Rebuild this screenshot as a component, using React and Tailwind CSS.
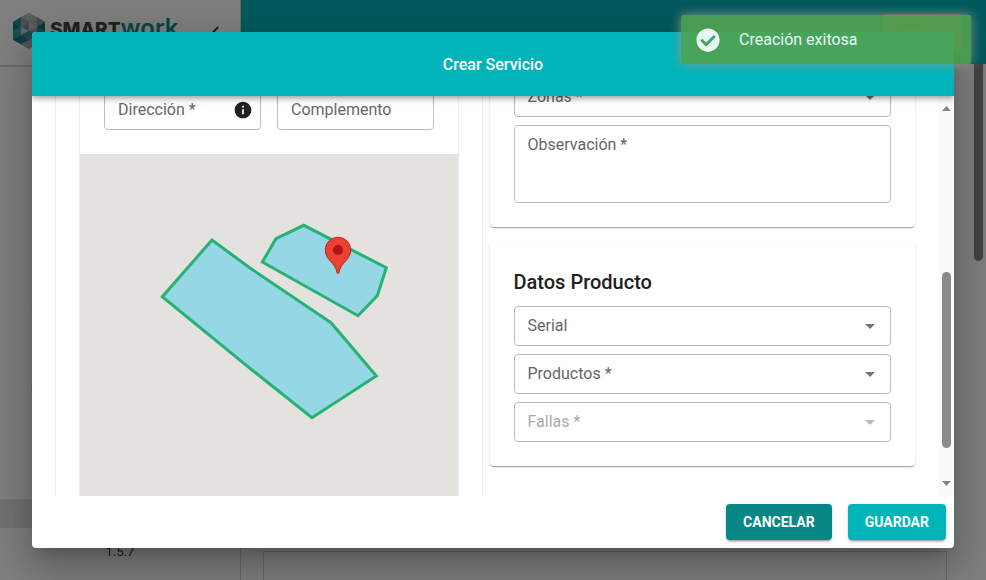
import React from "react";
import { MdInfo, MdArrowDropDown } from "react-icons/md";
import { FaCheckCircle } from "react-icons/fa";
import { ChevronLeft, Wrench, Users, MapPin, Truck, Calendar, Settings, FileText } from "lucide-react";

const cardShadow =
  "shadow-[0_2px_1px_-1px_rgba(0,0,0,0.2),0_1px_1px_0_rgba(0,0,0,0.14),0_1px_3px_0_rgba(0,0,0,0.12)]";

const navItems = [
  { name: "Inicio", Icon: FileText },
  { name: "Clientes", Icon: Users },
  { name: "Zonas", Icon: MapPin },
  { name: "Rutas", Icon: Truck },
  { name: "Agenda", Icon: Calendar },
  { name: "Ajustes", Icon: Settings },
  { name: "Servicios", Icon: Wrench, active: true },
];

function Logo() {
  return (
    <svg viewBox="0 0 34 36" className="h-9 w-[34px] shrink-0" aria-hidden="true">
      <path d="M17 0 33 9V27L17 36 1 27V9Z" fill="#a6a8ab" />
      <path d="M17 0 25 4 17 9 9 4Z" fill="#b9bbbd" />
      <path d="M9 4 17 9 9 14Z" fill="#9a9da0" />
      <path d="M25 4 17 9 25 14Z" fill="#adafb1" />
      <path d="M9 14 17 9 17 18Z" fill="#8c8f93" />
      <path d="M25 14 17 9 17 18Z" fill="#c2c4c6" />
      <path d="M1 9 9 4 9 14Z" fill="#1b8f98" />
      <path d="M1 9 9 14 1 18Z" fill="#157882" />
      <path d="M1 18 9 14 9 22Z" fill="#36a3ab" />
      <path d="M1 18 9 22 1 27Z" fill="#1fa0a6" />
      <path d="M1 27 9 22 9 31Z" fill="#157882" />
      <path d="M33 9 25 4 25 14Z" fill="#8f9396" />
      <path d="M33 9 25 14 33 18Z" fill="#0f6f7a" />
      <path d="M33 18 25 14 25 22Z" fill="#1e929b" />
      <path d="M33 18 25 22 25 31 33 27Z" fill="#127d87" />
      <path d="M9 14 17 18 9 22Z" fill="#c9cbcc" />
      <path d="M25 14 17 18 25 22Z" fill="#9c9fa2" />
      <path d="M9 22 17 18 25 22 17 27Z" fill="#30959e" />
      <path d="M9 22 17 27 9 31Z" fill="#188089" />
    </svg>
  );
}

function Sidebar() {
  return (
    <aside className="flex w-[241px] shrink-0 flex-col border-r border-[#d4d4d4] bg-white">
      <div className="flex h-[67px] shrink-0 items-center border-b-2 border-[#d4d4d4] pr-[14px] pb-1 pl-3">
        <Logo />
        <span className="ml-1 font-[Inter] text-[19px] font-extrabold text-[#444]">
          SMART<span className="text-2xl leading-5 font-semibold text-[#128a90]">work</span>
        </span>
        <button type="button" aria-label="Contraer menú" className="ml-auto pt-1 text-[#333]">
          <ChevronLeft size={22} strokeWidth={2} />
        </button>
      </div>
      <nav className="mt-auto flex flex-col gap-[13px]">
        {navItems.map(({ name, Icon, active }) => (
          <a
            key={name}
            href="#"
            className={
              active
                ? "flex h-[29px] items-center gap-3 bg-[#e2e2e2] pl-[31px] text-sm"
                : "flex h-[29px] items-center gap-3 pl-[31px] text-sm"
            }
          >
            <Icon size={18} className="text-[#d9883c]" />
            {name}
          </a>
        ))}
      </nav>
      <p className="flex h-[52px] shrink-0 items-center justify-center pb-1 text-[13px] text-[#333]">1.5.7</p>
    </aside>
  );
}

function Backdrop() {
  return (
    <div className="flex h-full">
      <Sidebar />
      <div className="flex min-w-0 flex-1 flex-col">
        <header className="flex h-16 shrink-0 justify-end bg-[#00b4b9] pt-[14px] pr-6">
          <button
            type="button"
            aria-label="Idioma"
            className="flex h-9 w-20 items-start gap-2 rounded border border-[#e2a4a4] bg-[#e8b08c] px-4 pt-[9px]"
          >
            <span className="h-1 w-6 bg-[#b9a020]" />
            <MdArrowDropDown size={20} className="text-[#205060]" />
          </button>
        </header>
        <div className="flex min-h-0 flex-1">
          <main className="flex flex-1 flex-col justify-end pr-6 pl-[22px]">
            <div className="h-[29px] border border-b-0 border-[#d4d4d4]" />
          </main>
          <div className="w-[15px] pl-[3px]">
            <div className="h-[197px] w-[9px] rounded-b-full bg-[#878787]" />
          </div>
        </div>
      </div>
    </div>
  );
}

const controlBase =
  "block w-full appearance-none rounded border border-[#bdbdbd] bg-transparent px-[13px] text-base text-[#222] outline-none";

function Field({ id, label, type = "text", disabled = false, icon = null }) {
  return (
    <div className="relative">
      {type === "select" && (
        <select id={id} disabled={disabled} defaultValue="" className={`h-10 ${controlBase}`}>
          <option value=""></option>
        </select>
      )}
      {type === "area" && <textarea id={id} className={`h-[78px] resize-none ${controlBase}`} />}
      {type === "text" && <input id={id} type="text" className={`h-10 ${controlBase}`} />}
      <label
        htmlFor={id}
        className={
          disabled
            ? "absolute top-0 left-[14px] leading-10 text-[#aaa]"
            : "absolute top-0 left-[14px] leading-10 text-[#66666a]"
        }
      >
        {label}
      </label>
      {type === "select" && (
        <MdArrowDropDown
          size={24}
          className={
            disabled
              ? "pointer-events-none absolute top-2 right-[9px] text-[#bbb]"
              : "pointer-events-none absolute top-2 right-[9px] text-[#757575]"
          }
        />
      )}
      {icon}
    </div>
  );
}

function ZoneMap() {
  return (
    <div className="mt-6 flex flex-1 justify-center overflow-hidden bg-[#e4e2de]">
      <svg viewBox="80 154 378 342" className="h-[342px] w-[378px] shrink-0" role="img" aria-label="Mapa">
        <g fill="#96d7e6" stroke="#27b175" strokeWidth="3">
          <path d="M162.3 296.7 212 240 250 268 331 322.7 376.3 376 312 417.7 250 368.3Z" />
          <path d="M262.3 262 276 238.7 303.7 225.3 386.3 267.7 377.3 295.7 358 315.7Z" />
        </g>
        <path
          d="M338 237.3c-7 0-12.7 5.6-12.7 12.6 0 4.400 1.900 7.600 4.700 10.800 3.800 4.200 6 6.700 7 11.700.2.900.5 1.300 1 1.300s.8-.4 1-1.300c1-5 3.200-7.500 7-11.700 2.800-3.200 4.700-6.400 4.700-10.800 0-7-5.700-12.600-12.700-12.600Z"
          fill="#ea4335"
          stroke="#c5221f"
          strokeWidth="1"
        />
        <circle cx="338" cy="250" r="5" fill="#b31412" />
      </svg>
    </div>
  );
}

function Scrollbar() {
  return (
    <div className="flex w-[15px] shrink-0 flex-col items-center bg-[#fbfbfb] pt-[10px] pb-[10px]">
      <svg viewBox="0 0 9 5" className="h-[5px] w-[9px]" aria-hidden="true">
        <path d="M0 5 4.500 0 9 5Z" fill="#858585" />
      </svg>
      <div className="flex-[161]" />
      <div className="h-44 w-[9px] rounded-full bg-[#8b8b8b]" />
      <div className="flex-[33]" />
      <svg viewBox="0 0 9 5" className="h-[5px] w-[9px]" aria-hidden="true">
        <path d="M0 0 4.500 5 9 0Z" fill="#858585" />
      </svg>
    </div>
  );
}

const buttonBase =
  "h-9 rounded px-[17px] pb-px text-sm font-bold text-white uppercase shadow-[0_3px_1px_-2px_rgba(0,0,0,0.2),0_2px_2px_0_rgba(0,0,0,0.14),0_1px_5px_0_rgba(0,0,0,0.12)]";

function ServiceDialog() {
  return (
    <form
      role="dialog"
      aria-labelledby="dialog-title"
      className="flex h-full w-full flex-col overflow-hidden rounded bg-white shadow-[0_11px_15px_-7px_rgba(0,0,0,0.2),0_24px_38px_3px_rgba(0,0,0,0.14),0_9px_46px_8px_rgba(0,0,0,0.12)]"
    >
      <header className="relative z-10 flex h-16 shrink-0 items-center justify-center bg-[#00b4b9] pt-0.5 shadow-[0_2px_4px_-1px_rgba(0,0,0,0.2),0_4px_5px_0_rgba(0,0,0,0.14),0_1px_10px_0_rgba(0,0,0,0.12)]">
        <h1 id="dialog-title" className="text-base font-medium text-white">
          Crear Servicio
        </h1>
      </header>

      <div className="flex min-h-0 flex-1 overflow-hidden">
        <div className="-mt-6 grid min-w-0 flex-1 grid-cols-2 gap-2 px-6">
          <section className={`flex px-6 ${cardShadow}`}>
            <div className={`flex flex-1 flex-col pt-[18px] ${cardShadow}`}>
              <div className="grid grid-cols-2 gap-4 px-6">
                <Field
                  id="direccion"
                  label="Dirección *"
                  icon={<MdInfo size={20} className="absolute top-[10px] right-2 text-[#212121]" />}
                />
                <Field id="complemento" label="Complemento" />
              </div>
              <ZoneMap />
            </div>
          </section>

          <div className="flex flex-col gap-[15px]">
            <section className={`flex flex-col gap-2 rounded px-6 pt-[5px] pb-6 ${cardShadow}`}>
              <Field id="zonas" label="Zonas *" type="select" />
              <Field id="observacion" label="Observación *" type="area" />
            </section>
            <section className={`flex flex-col gap-2 rounded p-6 ${cardShadow}`}>
              <h2 className="text-xl leading-8 font-medium text-[#212121]">Datos Producto</h2>
              <Field id="serial" label="Serial" type="select" />
              <Field id="productos" label="Productos *" type="select" />
              <Field id="fallas" label="Fallas *" type="select" disabled />
            </section>
          </div>
        </div>
        <Scrollbar />
      </div>

      <footer className="flex shrink-0 justify-end gap-4 p-2">
        <button type="button" className={`bg-[#078785] ${buttonBase}`}>
          Cancelar
        </button>
        <button type="submit" className={`bg-[#00b4b9] ${buttonBase}`}>
          Guardar
        </button>
      </footer>
    </form>
  );
}

function Toast() {
  return (
    <div
      role="status"
      className="absolute top-[15px] right-[15px] z-30 flex h-[49px] w-[290px] items-center gap-[19px] rounded-xs bg-[#51a351] pl-[15px] text-base text-white opacity-90 shadow-[0_0_12px_#999]"
    >
      <FaCheckCircle size={24} />
      Creación exitosa
    </div>
  );
}

export default function App() {
  return (
    <div className="relative h-screen overflow-hidden bg-white font-[Roboto,sans-serif]">
      <Backdrop />
      <div className="absolute inset-0 z-20 bg-black/50 p-8">
        <ServiceDialog />
      </div>
      <Toast />
    </div>
  );
}
